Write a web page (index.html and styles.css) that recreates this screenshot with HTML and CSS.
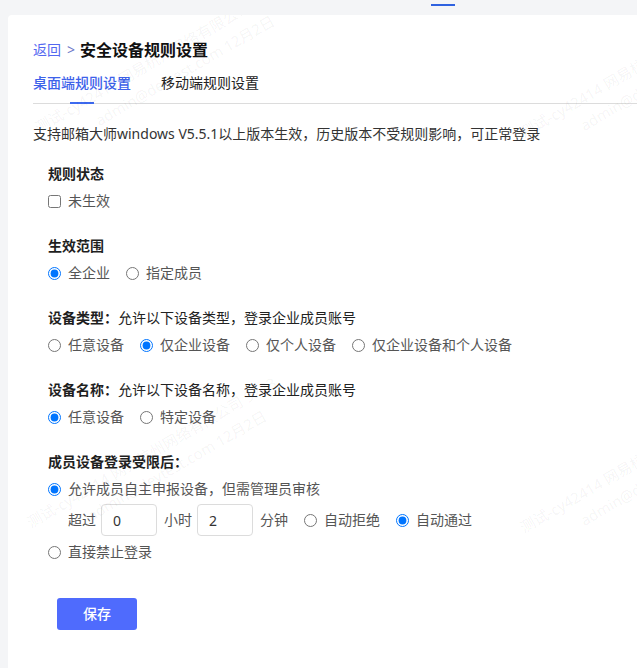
FILE: index.html
```html
<!DOCTYPE html>
<html lang="zh-CN">
  <head>
    <meta charset="UTF-8" />
    <title>安全设备规则设置</title>
    <link rel="stylesheet" href="styles.css">
  </head>
  <body>
    <div class="topbar">
      <span class="topbar__mark"></span>
    </div>
    <main class="card">
      <div class="crumb">
        <a class="crumb__back" href="#">返回</a>
        <span class="crumb__sep">&gt;</span>
        <h1 class="crumb__title">安全设备规则设置</h1>
      </div>
      <nav class="tabs">
        <span class="tabs__item tabs__item--active">桌面端规则设置</span>
        <span class="tabs__item">移动端规则设置</span>
      </nav>
      <p class="notice">支持邮箱大师windows V5.5.1以上版本生效，历史版本不受规则影响，可正常登录</p>

      <section class="group">
        <div class="group__title">规则状态</div>
        <div class="group__row">
          <label class="opt"><input type="checkbox" /><span>未生效</span></label>
        </div>
      </section>

      <section class="group">
        <div class="group__title">生效范围</div>
        <div class="group__row">
          <label class="opt"><input type="radio" name="scope" checked /><span>全企业</span></label>
          <label class="opt"><input type="radio" name="scope" /><span>指定成员</span></label>
        </div>
      </section>

      <section class="group">
        <div class="group__title">设备类型：<span class="group__hint">允许以下设备类型，登录企业成员账号</span></div>
        <div class="group__row">
          <label class="opt"><input type="radio" name="type" /><span>任意设备</span></label>
          <label class="opt"><input type="radio" name="type" checked /><span>仅企业设备</span></label>
          <label class="opt"><input type="radio" name="type" /><span>仅个人设备</span></label>
          <label class="opt"><input type="radio" name="type" /><span>仅企业设备和个人设备</span></label>
        </div>
      </section>

      <section class="group">
        <div class="group__title">设备名称：<span class="group__hint">允许以下设备名称，登录企业成员账号</span></div>
        <div class="group__row">
          <label class="opt"><input type="radio" name="name" checked /><span>任意设备</span></label>
          <label class="opt"><input type="radio" name="name" /><span>特定设备</span></label>
        </div>
      </section>

      <section class="group group--last">
        <div class="group__title">成员设备登录受限后：</div>
        <div class="group__row">
          <label class="opt"><input type="radio" name="limit" checked /><span>允许成员自主申报设备，但需管理员审核</span></label>
        </div>
        <div class="timer">
          <span>超过</span>
          <input class="timer__input" type="text" value="0" />
          <span>小时</span>
          <input class="timer__input" type="text" value="2" />
          <span>分钟</span>
          <label class="opt opt--timer"><input type="radio" name="auto" /><span>自动拒绝</span></label>
          <label class="opt"><input type="radio" name="auto" checked /><span>自动通过</span></label>
        </div>
        <div class="group__row">
          <label class="opt"><input type="radio" name="limit" /><span>直接禁止登录</span></label>
        </div>
      </section>

      <button class="save">保存</button>

      <div class="watermark watermark--a">测试-cy42414 网易杭州网络有限公司 9223<br /><span>admin@devtest.com 12月2日</span></div>
      <div class="watermark watermark--b">测试-cy42414 网易杭州网络有限公司 9223<br /><span>admin@devtest.com 12月2日</span></div>
      <div class="watermark watermark--c">测试-cy42414 网易杭州网络有限公司 9223<br /><span>admin@devtest.com 12月2日</span></div>
      <div class="watermark watermark--d">测试-cy42414 网易杭州网络有限公司 9223<br /><span>admin@devtest.com 12月2日</span></div>
    </main>
  </body>
</html>
```

FILE: styles.css
```css
:root {
  --color-bg: #f4f5f7;
  --color-blue: #4d6df5;
  --color-text: #333;
  --color-muted: #555;
  --color-line: #dcdcdc;
}

*,
*::before,
*::after {
  box-sizing: border-box;
}

html,
body {
  height: 100%;
}

body {
  margin: 0;
  display: flex;
  flex-direction: column;
  font-family: "Noto Sans", "Noto Sans CJK SC", sans-serif;
  font-size: 14px;
  line-height: 22px;
  color: var(--color-text);
  background-color: var(--color-bg);
  overflow: hidden;
}

.topbar {
  flex-shrink: 0;
  height: 15px;
  padding-top: 4px;
  padding-left: 431px;
}

.topbar__mark {
  display: block;
  width: 24px;
  height: 2px;
  background-color: #2f62e0;
}

.card {
  position: relative;
  flex: 1 1 auto;
  margin-left: 8px;
  padding: 23px 0 0 25px;
  background-color: #fff;
  border-top-left-radius: 4px;
  overflow: hidden;
}

/* breadcrumb */
.crumb {
  display: flex;
  align-items: center;
  height: 24px;
}

.crumb__back {
  color: #5468f0;
  text-decoration: none;
}

.crumb__sep {
  margin: 0 5px 0 6px;
  color: #6b78c8;
}

.crumb__title {
  margin: 0;
  font-size: 16px;
  font-weight: 700;
  color: #111;
}

/* tabs */
.tabs {
  display: flex;
  gap: 30px;
  border-bottom: 1px solid var(--color-line);
}

.tabs__item {
  position: relative;
  padding: 11px 0 10px;
  line-height: 20px;
  color: #222;
}

.tabs__item--active {
  color: #3d62ea;
  font-weight: 500;
}

.tabs__item--active::after {
  content: "";
  position: absolute;
  left: 50%;
  bottom: -1px;
  width: 24px;
  height: 2px;
  margin-left: -12px;
  background-color: #3d6af0;
}

.notice {
  margin: 19px 0 18px;
  color: #333;
}

/* form groups */
.group {
  margin-left: 15px;
  margin-bottom: 23px;
}

.group__title {
  font-weight: 700;
  color: #1f1f1f;
  margin-bottom: 5px;
}

.group__hint {
  font-weight: 400;
  color: #222;
}

.group__row {
  display: flex;
}

.opt {
  display: flex;
  align-items: center;
  margin-right: 16px;
  color: var(--color-muted);
}

.opt input {
  width: 13px;
  height: 13px;
  margin: 0 7px 0 0;
  accent-color: #0075ff;
}

.timer {
  display: flex;
  align-items: center;
  margin: 4px 0 5px 20px;
  color: var(--color-muted);
}

.timer__input {
  width: 56px;
  height: 32px;
  margin: 0 7px 0 5px;
  padding: 0 11px;
  border: 1px solid #dcdcdc;
  border-radius: 4px;
  font: inherit;
  color: #333;
  outline: none;
}

.opt--timer {
  margin-left: 16px;
}

.group--last {
  margin-bottom: 35px;
}

.save {
  display: block;
  width: 80px;
  height: 32px;
  margin-left: 24px;
  border: 0;
  border-radius: 3px;
  background-color: #4f6bfd;
  color: #fff;
  font: inherit;
  font-weight: 500;
}

/* watermark overlay */
.watermark {
  position: absolute;
  transform: rotate(-30deg);
  transform-origin: 0 0;
  white-space: nowrap;
  font-size: 15px;
  line-height: 24px;
  color: rgba(0, 0, 0, 0.05);
  pointer-events: none;
}

.watermark span {
  padding-left: 56px;
}

.watermark--a {
  left: 22px;
  top: 103px;
}

.watermark--b {
  left: 507px;
  top: 108px;
}

.watermark--c {
  left: 14px;
  top: 498px;
}

.watermark--d {
  left: 507px;
  top: 503px;
}
```
